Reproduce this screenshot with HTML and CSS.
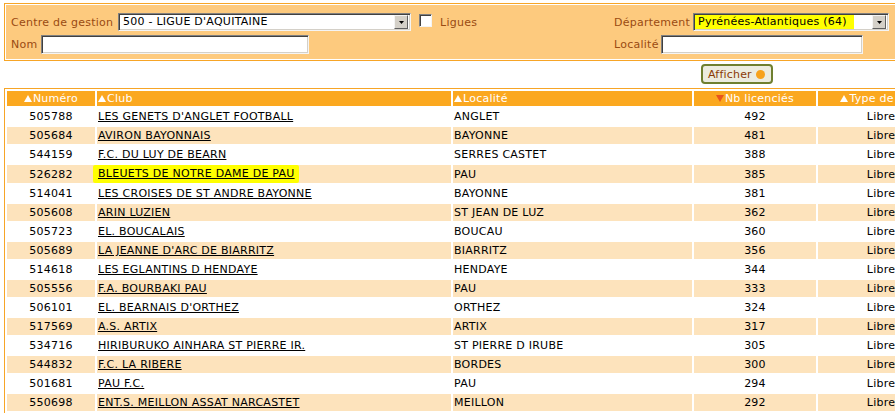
FILE: index.html
```html
<!DOCTYPE html>
<html lang="fr">
<head>
<meta charset="utf-8">
<title>Clubs</title>
<link rel="stylesheet" href="styles.css">
</head>
<body>
<div class="filters">
  <div class="filters-inner">
    <div class="cell">
      <span class="lbl lbl-centre">Centre de gestion</span>
      <div class="sel sel-centre"><span class="sel-val">500 - LIGUE D'AQUITAINE</span><span class="sel-btn"><svg width="5" height="3" viewBox="0 0 5 3"><polygon points="0,0 5,0 2.5,3" fill="#000"/></svg></span></div>
      <span class="chk"></span>
      <span class="lbl lbl-ligues">Ligues</span>
    </div>
    <div class="cell">
      <span class="lbl lbl-dept">Département</span>
      <div class="sel sel-dept"><span class="sel-val">Pyrénées-Atlantiques (64)</span><span class="sel-btn"><svg width="5" height="3" viewBox="0 0 5 3"><polygon points="0,0 5,0 2.5,3" fill="#000"/></svg></span></div>
    </div>
    <div class="cell">
      <span class="lbl lbl-nom">Nom</span>
      <span class="inp inp-nom"></span>
    </div>
    <div class="cell">
      <span class="lbl lbl-loc">Localité</span>
      <span class="inp inp-loc"></span>
    </div>
  </div>
</div>

<div class="actions">
  <button class="btn" type="button">Afficher <span class="dot"></span></button>
</div>

<table class="list">
  <colgroup>
    <col class="c-num"><col class="c-club"><col class="c-loc"><col class="c-nb"><col class="c-type">
  </colgroup>
  <thead>
    <tr>
      <th class="center"><svg class="tri" width="8" height="7" viewBox="0 0 8 7"><polygon points="0,7 4,0 8,7" fill="#fff"/></svg>Numéro</th>
      <th class="left"><svg class="tri" width="8" height="7" viewBox="0 0 8 7"><polygon points="0,7 4,0 8,7" fill="#fff"/></svg>Club</th>
      <th class="left"><svg class="tri" width="8" height="7" viewBox="0 0 8 7"><polygon points="0,7 4,0 8,7" fill="#fff"/></svg>Localité</th>
      <th class="center"><svg class="tri" width="8" height="7" viewBox="0 0 8 7"><polygon points="0,0 8,0 4,7" fill="#e8541c"/></svg>Nb licenciés</th>
      <th class="center"><svg class="tri" width="8" height="7" viewBox="0 0 8 7"><polygon points="0,7 4,0 8,7" fill="#fff"/></svg>Type de club</th>
    </tr>
  </thead>
  <tbody>
    <tr><td class="center">505788</td><td><a href="#">LES GENETS D'ANGLET FOOTBALL</a></td><td>ANGLET</td><td class="center">492</td><td class="center">Libre</td></tr>
    <tr class="alt"><td class="center">505684</td><td><a href="#">AVIRON BAYONNAIS</a></td><td>BAYONNE</td><td class="center">481</td><td class="center">Libre</td></tr>
    <tr><td class="center">544159</td><td><a href="#">F.C. DU LUY DE BEARN</a></td><td>SERRES CASTET</td><td class="center">388</td><td class="center">Libre</td></tr>
    <tr class="alt"><td class="center">526282</td><td><a href="#" class="mark">BLEUETS DE NOTRE DAME DE PAU</a></td><td>PAU</td><td class="center">385</td><td class="center">Libre</td></tr>
    <tr><td class="center">514041</td><td><a href="#">LES CROISES DE ST ANDRE BAYONNE</a></td><td>BAYONNE</td><td class="center">381</td><td class="center">Libre</td></tr>
    <tr class="alt"><td class="center">505608</td><td><a href="#">ARIN LUZIEN</a></td><td>ST JEAN DE LUZ</td><td class="center">362</td><td class="center">Libre</td></tr>
    <tr><td class="center">505723</td><td><a href="#">EL. BOUCALAIS</a></td><td>BOUCAU</td><td class="center">360</td><td class="center">Libre</td></tr>
    <tr class="alt"><td class="center">505689</td><td><a href="#">LA JEANNE D'ARC DE BIARRITZ</a></td><td>BIARRITZ</td><td class="center">356</td><td class="center">Libre</td></tr>
    <tr><td class="center">514618</td><td><a href="#">LES EGLANTINS D HENDAYE</a></td><td>HENDAYE</td><td class="center">344</td><td class="center">Libre</td></tr>
    <tr class="alt"><td class="center">505556</td><td><a href="#">F.A. BOURBAKI PAU</a></td><td>PAU</td><td class="center">333</td><td class="center">Libre</td></tr>
    <tr><td class="center">506101</td><td><a href="#">EL. BEARNAIS D'ORTHEZ</a></td><td>ORTHEZ</td><td class="center">324</td><td class="center">Libre</td></tr>
    <tr class="alt"><td class="center">517569</td><td><a href="#">A.S. ARTIX</a></td><td>ARTIX</td><td class="center">317</td><td class="center">Libre</td></tr>
    <tr><td class="center">534716</td><td><a href="#">HIRIBURUKO AINHARA ST PIERRE IR.</a></td><td>ST PIERRE D IRUBE</td><td class="center">305</td><td class="center">Libre</td></tr>
    <tr class="alt"><td class="center">544832</td><td><a href="#">F.C. LA RIBERE</a></td><td>BORDES</td><td class="center">300</td><td class="center">Libre</td></tr>
    <tr><td class="center">501681</td><td><a href="#">PAU F.C.</a></td><td>PAU</td><td class="center">294</td><td class="center">Libre</td></tr>
    <tr class="alt"><td class="center">550698</td><td><a href="#">ENT.S. MEILLON ASSAT NARCASTET</a></td><td>MEILLON</td><td class="center">292</td><td class="center">Libre</td></tr>
  </tbody>
</table>
</body>
</html>
```

FILE: styles.css
```css
html, body {
  margin: 0;
  background: #fff;
}
body {
  padding: 3px 0 0 4px;
  font-family: "DejaVu Sans", Verdana, sans-serif;
  font-size: 11px;
  letter-spacing: 0.25px;
  color: #000;
  overflow: hidden;
  width: 1000px;
}

/* ---------- filter panel ---------- */
.filters {
  width: 943px;
  border: 1px solid #f7a526;
  padding: 1px;
  background: #fff;
}
.filters-inner {
  background: #fdca7e;
  padding: 8px 5px 5px 5px;
  display: grid;
  grid-template-columns: 603px auto;
  grid-template-rows: 18px 19px;
  row-gap: 4px;
}
.cell {
  display: flex;
  align-items: center;
}
.lbl {
  color: #9a4b12;
  white-space: nowrap;
}
.lbl-centre { width: 107px; }
.lbl-nom { width: 30px; }
.lbl-ligues { margin-left: 8px; }
.lbl-dept { width: 79px; }
.lbl-loc { width: 47px; }

.sel {
  display: flex;
  align-items: center;
  box-sizing: border-box;
  height: 18px;
  border: 1px solid;
  border-color: #808080 #f4f4f4 #f4f4f4 #808080;
  box-shadow: inset 1px 1px 0 #404040, inset -1px -1px 0 #d4d0c8;
  background: #fff;
  padding: 2px 2px 2px 2px;
}
.sel-val {
  flex: 1;
  padding-left: 2px;
  line-height: 14px;
  white-space: nowrap;
}
.sel-btn {
  width: 14px;
  height: 14px;
  box-sizing: border-box;
  background: #d4d0c8;
  border: 1px solid;
  border-color: #f4f4f4 #606060 #606060 #f4f4f4;
  display: flex;
  align-items: center;
  justify-content: center;
}
.sel-centre { width: 293px; }
.sel-dept {
  width: 196px;
  position: relative;
  background: linear-gradient(to right, #ffff00 160px, #fff 160px);
}
.sel-dept::before {
  content: "";
  position: absolute;
  left: -8px;
  top: -6px;
  width: 170px;
  height: 26px;
  background: #ffff00;
  z-index: -1;
  border-radius: 2px;
}
.chk {
  width: 13px;
  height: 13px;
  box-sizing: border-box;
  margin-left: 8px;
  margin-top: -4px;
  background: #fff;
  border: 1px solid;
  border-color: #808080 #f4f4f4 #f4f4f4 #808080;
  box-shadow: inset 1px 1px 0 #404040;
}
.inp {
  display: block;
  box-sizing: border-box;
  height: 19px;
  background: #fff;
  border: 1px solid;
  border-color: #808080 #f4f4f4 #f4f4f4 #808080;
  box-shadow: inset 1px 1px 0 #404040, inset -1px -1px 0 #d4d0c8;
}
.inp-nom { width: 268px; }
.inp-loc { width: 202px; }

/* ---------- button ---------- */
.actions {
  padding: 3px 0 4px 697px;
  height: 20px;
}
.btn {
  display: inline-flex;
  align-items: center;
  gap: 4px;
  height: 20px;
  width: 72px;
  box-sizing: border-box;
  border: 2px solid #6f7f30;
  border-radius: 4px;
  background: #ececdf;
  color: #8a3a06;
  font-family: "DejaVu Sans", Verdana, sans-serif;
  font-size: 11px;
  letter-spacing: 0.2px;
  padding: 0 0 0 5px;
  margin: 0;
}
.dot {
  width: 9px;
  height: 9px;
  border-radius: 50%;
  background: #f7a21b;
  display: inline-block;
}

/* ---------- list ---------- */
.list {
  border: 1px solid #f7a526;
  border-spacing: 2px;
  table-layout: fixed;
  width: 943px;
  font-size: 11px;
}
.c-num { width: 88px; }
.c-club { width: 354px; }
.c-loc { width: 239px; }
.c-nb { width: 122px; }
.c-type { width: 126px; }

.list th {
  background: #fba81f;
  color: #fff;
  font-weight: normal;
  height: 15px;
  padding: 0 1px;
  line-height: 15px;
  white-space: nowrap;
  overflow: hidden;
}
.list td {
  height: 17px;
  padding: 0 1px;
  line-height: 17px;
  white-space: nowrap;
  overflow: visible;
}
.list tr.alt td { background: #fde3bc; }
.left { text-align: left; }
.center { text-align: center; }
.tri {
  vertical-align: 0;
  margin-right: 1px;
}
.list a {
  color: #000;
  text-decoration: underline;
}
.mark {
  display: inline-block;
  background: #ffff00;
  border-radius: 2px;
  padding: 0 4px 1px 5px;
  margin-left: -5px;
  line-height: 17px;
}
```
